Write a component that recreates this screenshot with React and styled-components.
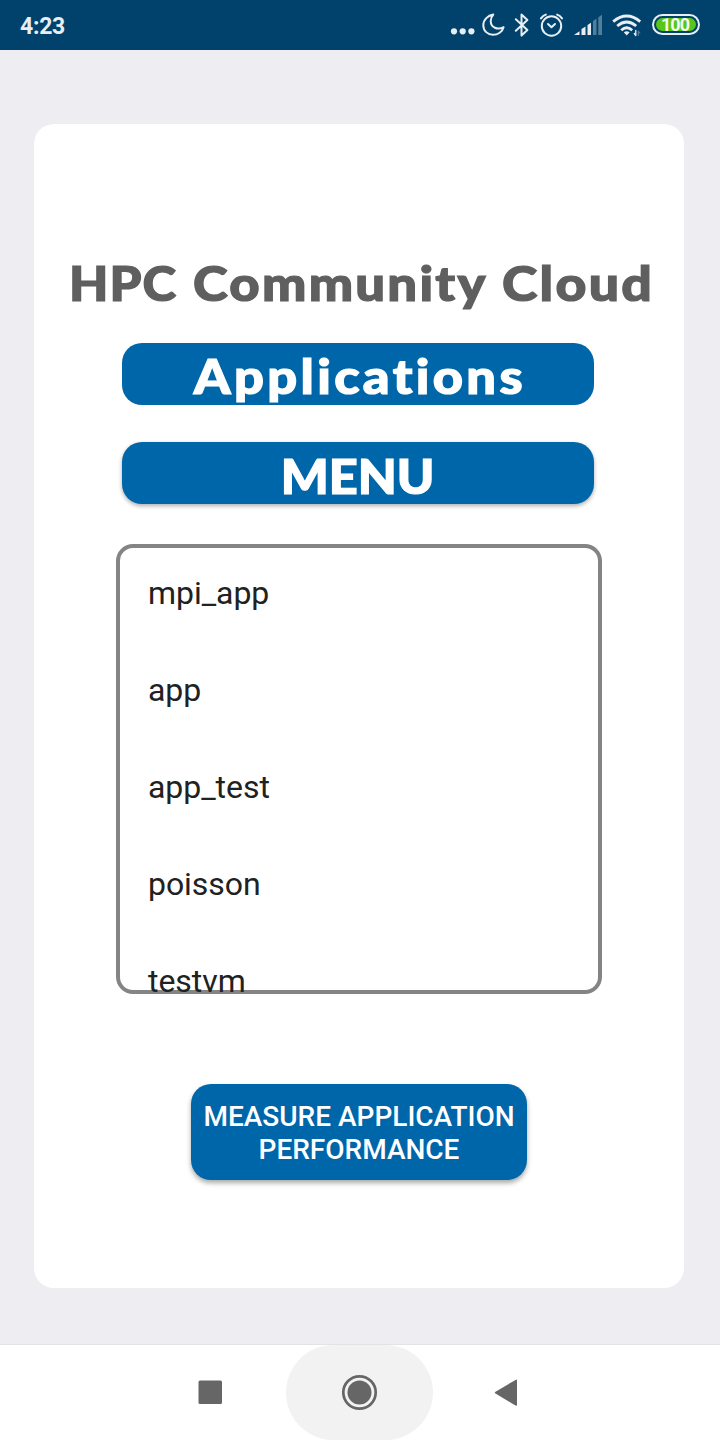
import React from "react";
import styled, { createGlobalStyle } from "styled-components";

const GlobalStyle = createGlobalStyle`
  * { box-sizing: border-box; }
  body { margin: 0; background: #ededf2; font-family: Roboto, sans-serif; }
`;

const Screen = styled.div`
  width: 720px;
  height: 1440px;
  display: flex;
  flex-direction: column;
  background: #ededf2;
  overflow: hidden;
`;

const StatusBar = styled.header`
  height: 50px;
  flex: none;
  display: flex;
  align-items: center;
  justify-content: space-between;
  padding: 0 20px;
  background: #00426b;
  color: #e8eef2;
`;

const Clock = styled.span`
  font-size: 23px;
  font-weight: 700;
  line-height: 27px;
  padding-top: 3px;
  letter-spacing: -0.25px;
`;

const StatusIcons = styled.div`
  display: flex;
  align-items: center;
  height: 50px;
`;

const StatusIcon = styled.svg`
  display: block;
  flex: none;
  width: ${(p) => p.$width}px;
  height: 50px;
  margin-right: ${(p) => p.$gap}px;
  fill: none;
  stroke: #e8eef2;
  stroke-width: 2;
  stroke-linecap: round;
  stroke-linejoin: round;
`;

const Battery = styled.div`
  width: 48px;
  height: 21px;
  margin-top: -1px;
  padding: 2px;
  border: 2px solid #e8eef2;
  border-radius: 11px;
`;

const BatteryLevel = styled.div`
  height: 13px;
  border-radius: 7px;
  background: #58c614;
  color: #f4f8f0;
  font-size: 18px;
  font-weight: 700;
  line-height: 14px;
  text-align: center;
  letter-spacing: -1px;
  padding-right: 2px;
`;

const Content = styled.main`
  flex: 1;
  padding: 74px 36px 56px 34px;
  display: flex;
`;

const Card = styled.section`
  flex: 1;
  display: flex;
  flex-direction: column;
  align-items: center;
  padding-top: 124px;
  border-radius: 20px;
  background: #fff;
`;

const Title = styled.h1`
  display: grid;
  grid-template-columns: 124px 309px 153px;
  width: 586px;
  height: 72px;
  margin: 0 0 0 5px;
  color: #5f5f5f;
  font: 900 47px/70px Lato, sans-serif;
`;

const Word = styled.span`
  display: inline-block;
  justify-self: start;
  white-space: nowrap;
  letter-spacing: ${(p) => p.$spacing}px;
  margin-right: ${(p) => -p.$spacing}px;
  transform: scaleX(${(p) => p.$stretch});
  transform-origin: ${(p) => p.$origin || "center"};
  -webkit-text-stroke: 1.2px currentColor;
`;

const Banner = styled.div`
  width: 472px;
  height: 62px;
  margin: 23px 2px 0 0;
  border-radius: 20px;
  overflow: hidden;
  background: #0066aa;
  color: #fff;
  text-align: center;
  font: 900 47px/66px Lato, sans-serif;
`;

const MenuButton = styled.button`
  width: 472px;
  height: 62px;
  margin: 37px 2px 0 0;
  padding: 0;
  border: 0;
  border-radius: 20px;
  background: #0066aa;
  color: #fff;
  box-shadow: 0 2px 4px rgba(0, 0, 0, 0.32);
  font: 900 47px/68px Lato, sans-serif;
`;

const AppList = styled.ul`
  width: 486px;
  height: 450px;
  margin: 40px 0 0;
  padding: 1px 32px 0;
  list-style: none;
  overflow: hidden;
  border-radius: 17px;
  box-shadow: inset 0 0 0 4px #848484;
`;

const AppItem = styled.li`
  height: 97px;
  line-height: 97px;
  font-size: 32px;
  letter-spacing: -0.05px;
  color: #212121;
`;

const MeasureButton = styled.button`
  width: 336px;
  height: 96px;
  margin-top: 90px;
  padding: 2px 0 0;
  border: 0;
  border-radius: 20px;
  background: #0066aa;
  color: #fff;
  box-shadow: 0 3px 5px rgba(0, 0, 0, 0.34);
  font: 500 28px/33px Roboto, sans-serif;
`;

const NavBar = styled.nav`
  height: 96px;
  flex: none;
  display: flex;
  justify-content: center;
  padding-right: 2px;
  border-top: 1px solid #e3e3e6;
  background: #fff;
`;

const NavButton = styled.div`
  width: 147px;
  height: 95px;
  border-radius: 50px;
  background: ${(p) => (p.$pressed ? "#f2f2f2" : "transparent")};
`;

const NavIcon = styled.svg`
  display: block;
  width: 147px;
  height: 95px;
  fill: #666;
`;

const apps = ["mpi_app", "app", "app_test", "poisson", "testvm"];

export default function App() {
  return (
    <Screen>
      <GlobalStyle />
      <StatusBar>
        <Clock>4:23</Clock>
        <StatusIcons>
          <StatusIcon $width={25} $gap={6} viewBox="0 0 25 50">
            <g fill="#e8eef2" stroke="none">
              <circle cx="4" cy="31.3" r="3.1" />
              <circle cx="12.7" cy="31.3" r="3.1" />
              <circle cx="21.4" cy="31.3" r="3.1" />
            </g>
          </StatusIcon>
          <StatusIcon $width={24} $gap={8} viewBox="0 0 24 50">
            <path d="M12.3 14.6C7 15.5 2.3 19.5 2.3 25.2C2.3 30.8 6.7 34.8 12 34.8C16.9 34.8 21.4 31.8 22.6 27.2C16.5 30.6 9.8 27.2 9.7 21.2C9.7 18.6 10.5 16.5 12.3 14.6Z" />
          </StatusIcon>
          <StatusIcon $width={16} $gap={10} viewBox="0 0 16 50">
            <path d="M2.8 19.3L14.4 30L8.5 35.6V14.4L14.4 20L2.8 30.7" />
          </StatusIcon>
          <StatusIcon $width={24} $gap={11} viewBox="0 0 24 50">
            <circle cx="12.5" cy="26" r="9.7" />
            <path d="M2 18.4Q4 15.5 6.8 14.6M23 18.4Q21 15.5 18.2 14.6M9 24L12.5 27.3L16 24" />
          </StatusIcon>
          <StatusIcon $width={28} $gap={10} viewBox="0 0 28 50">
            <g stroke="none" fill="#e8eef2">
              <path d="M0 35L5.5 31.3V35Z" />
              <path d="M7.5 29L11.5 26.5V35H7.5Z" />
              <path d="M13.5 25L17 22.7V35H13.5Z" />
              <path d="M19 21L22.5 18.6V35H19Z" opacity=".35" />
              <path d="M24.3 17.2L28 14.7V35H24.3Z" opacity=".35" />
            </g>
          </StatusIcon>
          <StatusIcon $width={30} $gap={10} viewBox="0 0 30 50">
            <g strokeWidth="2.8" strokeLinecap="butt">
              <path d="M1.2 21.6Q14.7 10.4 28.2 21.6" />
              <path d="M5.2 26Q14.7 18 24.2 26" />
              <path d="M9.2 30.2Q14.7 25.4 20.2 30.2" />
            </g>
            <path d="M11.8 32.3Q14.7 30 17.6 32.3L14.7 35.4Z" fill="#e8eef2" stroke="none" />
            <path d="M22.3 33.5L23.8 35.5V30.5" strokeWidth="1.3" />
            <path d="M26.3 35.5V31L27.8 33" strokeWidth="1.2" opacity=".35" />
          </StatusIcon>
          <Battery><BatteryLevel>100</BatteryLevel></Battery>
        </StatusIcons>
      </StatusBar>
      <Content>
        <Card>
          <Title>
            <Word $spacing={1} $stretch={1.085} $origin="left">HPC</Word>
            <Word $spacing={2} $stretch={1.12} $origin="left">Community</Word>
            <Word $spacing={2} $stretch={1.14} $origin="left">Cloud</Word>
          </Title>
          <Banner><Word $spacing={3} $stretch={1.115}>Applications</Word></Banner>
          <MenuButton><Word $spacing={0} $stretch={1.075}>MENU</Word></MenuButton>
          <AppList>
            {apps.map((name) => <AppItem key={name}>{name}</AppItem>)}
          </AppList>
          <MeasureButton>MEASURE APPLICATION<br />PERFORMANCE</MeasureButton>
        </Card>
      </Content>
      <NavBar>
        <NavButton>
          <NavIcon viewBox="0 0 147 95"><rect x="59.5" y="35.5" width="23.5" height="23.5" rx="1.5" /></NavIcon>
        </NavButton>
        <NavButton $pressed>
          <NavIcon viewBox="0 0 147 95">
            <circle cx="73.5" cy="47.5" r="12" />
            <circle cx="73.5" cy="47.5" r="16.2" fill="none" stroke="#666" strokeWidth="2.7" />
          </NavIcon>
        </NavButton>
        <NavButton>
          <NavIcon viewBox="0 0 147 95"><path d="M62.5 46.8Q61 47.7 62.5 48.6L82.5 60.5Q84 61.3 84 59.8V35.6Q84 34.1 82.5 34.9Z" /></NavIcon>
        </NavButton>
      </NavBar>
    </Screen>
  );
}
